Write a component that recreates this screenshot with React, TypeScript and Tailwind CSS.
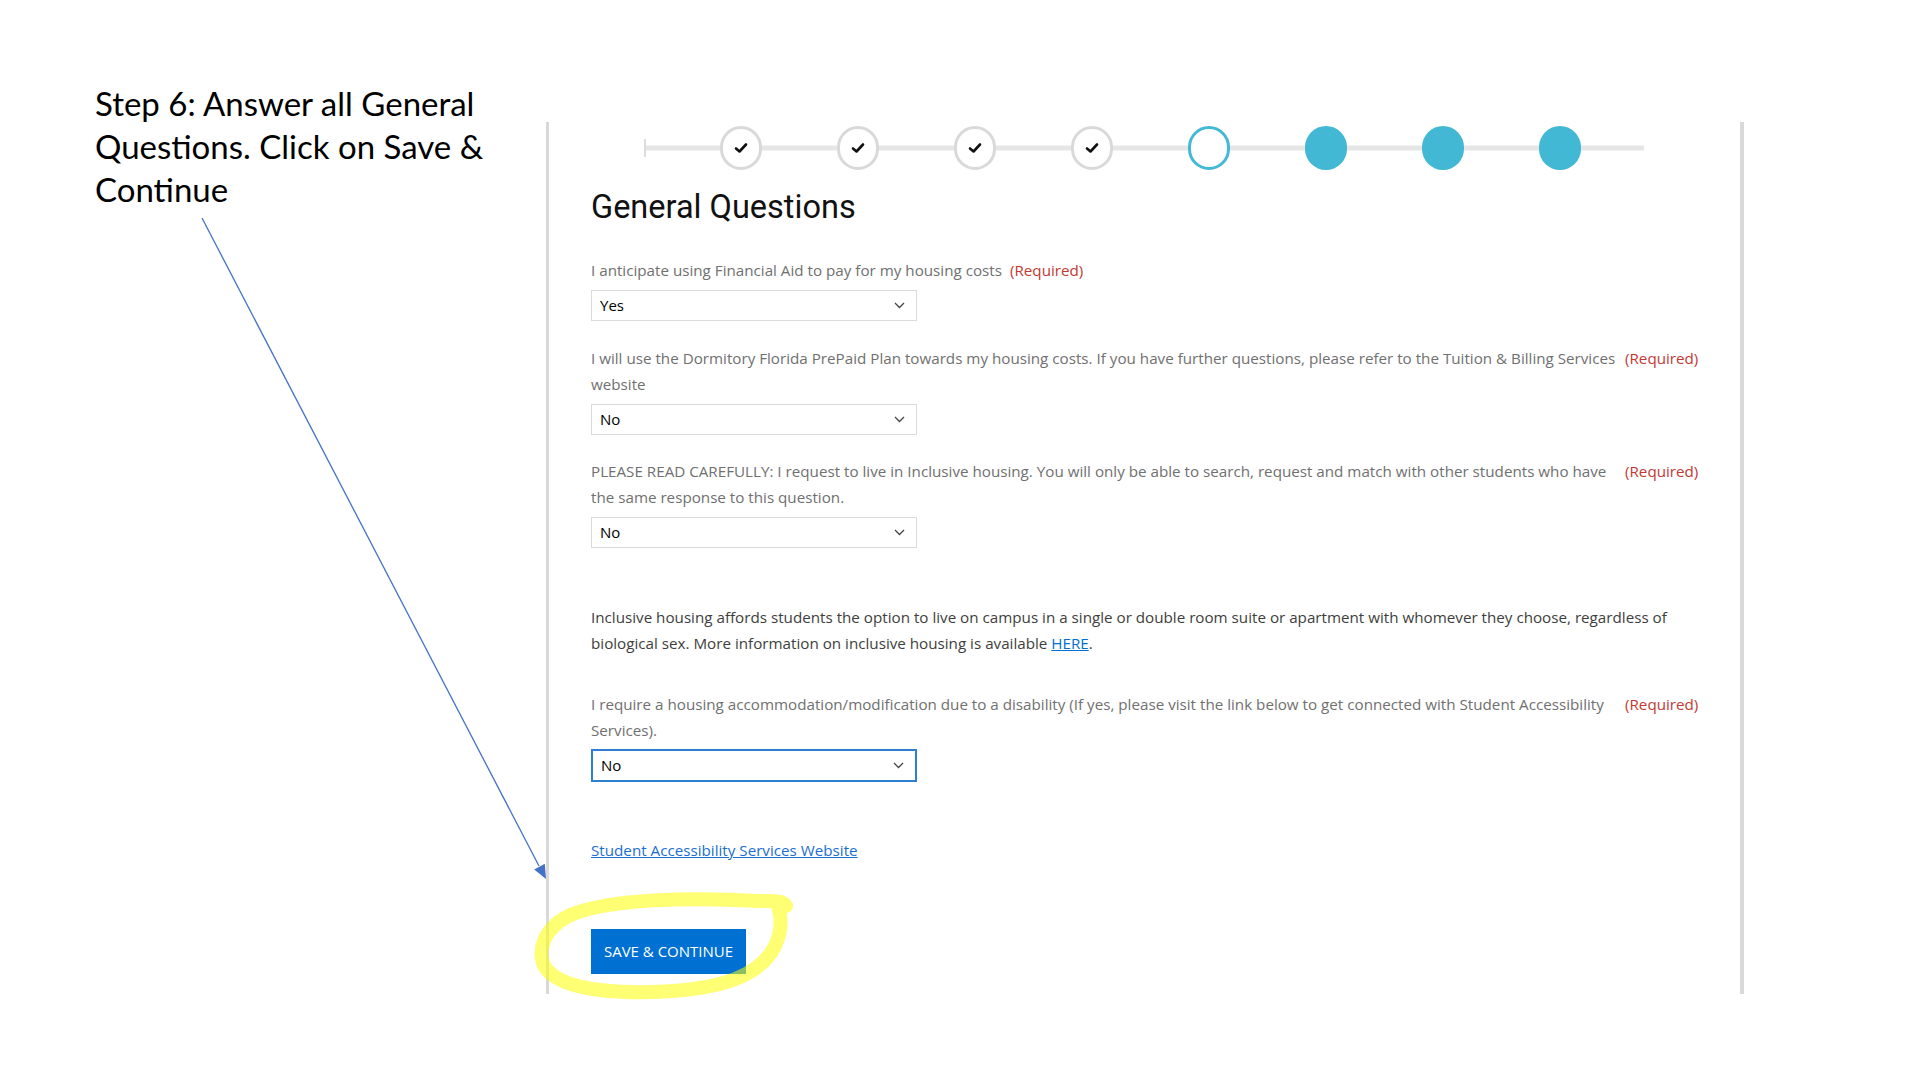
const steps = ["done", "done", "done", "done", "current", "todo", "todo", "todo"];

const Check = () => (
  <svg width="14" height="12" viewBox="0 0 14 12">
    <path d="M2 6.5 L5.5 9.5 L12 2.5" fill="none" stroke="#111" strokeWidth="2.6" strokeLinecap="round" strokeLinejoin="round" />
  </svg>
);

const Chevron = () => (
  <svg width="11" height="7" viewBox="0 0 11 7">
    <path d="M1 1 L5.5 5.5 L10 1" fill="none" stroke="#444" strokeWidth="1.3" />
  </svg>
);

const Stepper = () => (
  <div className="relative mt-[4px] ml-[53px] flex h-[44px] w-[1000px] items-center">
    <div className="absolute top-1/2 right-0 left-0 h-[5px] -translate-y-1/2 bg-[#e6e6e6]" />
    <div className="absolute top-1/2 left-0 h-[18px] w-[2px] -translate-y-1/2 bg-[#dcdcdc]" />
    <div className="relative ml-[76px] flex gap-[75px]">
      {steps.map((s, i) => {
        if (s === "done") {
          return (
            <div key={i} className="flex h-[44px] w-[42px] items-center justify-center rounded-full border-[3px] border-[#d9d9d9] bg-white">
              <Check />
            </div>
          );
        }
        if (s === "current") {
          return <div key={i} className="h-[44px] w-[42px] rounded-full border-[3px] border-[#44b9d6] bg-white" />;
        }
        return <div key={i} className="h-[44px] w-[42px] rounded-full bg-[#42b8d5]" />;
      })}
    </div>
  </div>
);

const Select = ({ value, focused }: { value: string; focused?: boolean }) => (
  <div
    className={`flex w-[326px] items-center justify-between bg-white pr-[11px] pl-[8px] text-[15px] text-black ${
      focused ? "h-[33px] border-2 border-[#2f7fd1]" : "h-[31px] border border-[#dddbda]"
    }`}
  >
    <span>{value}</span>
    <Chevron />
  </div>
);

const Label = ({ text }: { text: string }) => (
  <div className="flex text-[15.2px] leading-[26px]">
    <span className="max-w-[1026px] text-[#707070]">{text}</span>
    <span className="ml-[8px] shrink-0 text-[#c23934]">(Required)</span>
  </div>
);

export default function App() {
  return (
    <div className="relative h-[1080px] w-[1920px] overflow-hidden bg-white">
      <div className="flex items-start">
        <div className="w-[546px] shrink-0 pt-[82px] pl-[95px] text-[33px] leading-[43px] text-black" style={{ fontFamily: "Lato, 'Open Sans', sans-serif" }}>
          Step 6: Answer all General
          <br />
          Questions. Click on Save &amp;
          <br />
          Continue
        </div>

        <div
          className="mt-[122px] flex h-[872px] w-[1198px] shrink-0 flex-col border-r-4 border-l-[3px] border-[#d9d9d9] pr-[30px] pl-[42px]"
          style={{ fontFamily: "'Open Sans', 'Liberation Sans', sans-serif" }}
        >
          <Stepper />

          <h2 className="mt-[19px] text-[32.5px] leading-[36px] text-[#111]" style={{ fontFamily: "Roboto, 'Liberation Sans', sans-serif" }}>
            General Questions
          </h2>

          <div className="mt-[32px]">
            <Label text="I anticipate using Financial Aid to pay for my housing costs" />
            <div className="mt-[7px]">
              <Select value="Yes" />
            </div>
          </div>

          <div className="mt-[24px]">
            <Label text="I will use the Dormitory Florida PrePaid Plan towards my housing costs. If you have further questions, please refer to the Tuition & Billing Services website" />
            <div className="mt-[7px]">
              <Select value="No" />
            </div>
          </div>

          <div className="mt-[23px]">
            <Label text="PLEASE READ CAREFULLY: I request to live in Inclusive housing. You will only be able to search, request and match with other students who have the same response to this question." />
            <div className="mt-[7px]">
              <Select value="No" />
            </div>
          </div>

          <p className="mt-[56px] max-w-[1106px] text-[15.2px] leading-[26px] text-[#3e3e3c]">
            Inclusive housing affords students the option to live on campus in a single or double room suite or apartment with whomever they choose, regardless of biological sex. More information on inclusive housing is available{" "}
            <a className="text-[#0070d2] underline">HERE</a>.
          </p>

          <div className="mt-[35px]">
            <Label text="I require a housing accommodation/modification due to a disability (If yes, please visit the link below to get connected with Student Accessibility Services)." />
            <div className="mt-[6px]">
              <Select value="No" focused />
            </div>
          </div>

          <a className="mt-[55px] self-start text-[15.2px] leading-[26px] text-[#1b6fd0] underline">
            Student Accessibility Services Website
          </a>

          <button className="mt-[66px] h-[45px] w-[155px] self-start bg-[#0070d2] text-[15px] text-white">
            SAVE &amp; CONTINUE
          </button>
        </div>
      </div>

      <svg className="pointer-events-none absolute top-0 left-0" width="1920" height="1080" viewBox="0 0 1920 1080">
        <line x1="202" y1="218" x2="539" y2="866" stroke="#4472c4" strokeWidth="1.3" />
        <polygon points="546,879 544.8,863.8 534.2,869.4" fill="#4472c4" />
        <path
          d="M786 906 C783 900 772 901 758 901 C690 897 612 899 573 914 C542 927 535 955 547 970 C565 990 612 993 652 992 C722 990 760 976 775 946 C782 931 782 918 778 906"
          fill="none"
          stroke="#ffff00"
          strokeOpacity="0.55"
          strokeWidth="14"
          strokeLinecap="round"
          strokeLinejoin="round"
        />
      </svg>
    </div>
  );
}
